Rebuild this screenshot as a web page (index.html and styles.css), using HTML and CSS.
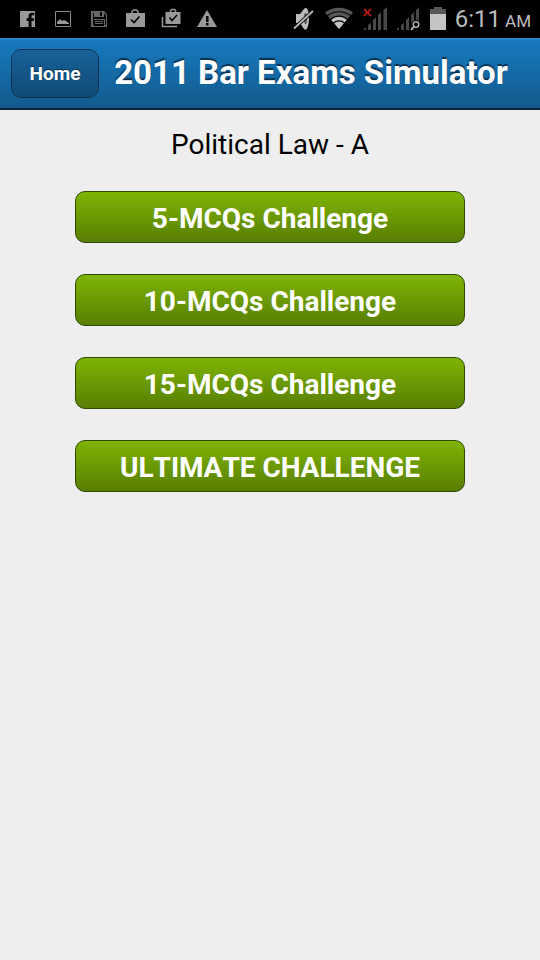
FILE: index.html
```
<!DOCTYPE html>
<html lang="en">
<head>
    <meta charset="UTF-8">
    <meta name="viewport" content="width=device-width, initial-scale=1.0">
    <title>2011 Bar Exams Simulator</title>
    <link rel="stylesheet" href="styles.css">
</head>
<body>
    <div class="status-bar">
        <div class="notifications">
            <!-- Facebook -->
            <svg width="24" height="24" viewBox="0 0 24 24">
                <path fill="#999" d="M5 4h15v16h-3.500v-6h2.200l.5-2.700h-2.700V9.500c0-.9.400-1.300 1.300-1.300h1.500V5.800h-2.300c-2.400 0-3.400 1.300-3.400 3.400v2.100h-2V14h2v6H5z"/>
            </svg>
            <!-- Picture -->
            <svg width="24" height="24" viewBox="0 0 24 24">
                <path fill="none" stroke="#888" d="M4.500 4.500h15v15h-15z"/>
                <path fill="#999" d="M6 17v-2l3-3 2 2 2-1 2 1 3 2v1z"/>
            </svg>
            <!-- Saved -->
            <svg width="24" height="24" viewBox="0 0 24 24">
                <path fill="#686868" fill-rule="evenodd" d="M4 4h13l3 3v13H4zM6 6v12h1v-6h11v6h1V8l-2-2v4H7V6zM13 5v4h2V5zM7 13v6h10v-6zM8 14h8v1H8zM8 16h8v1H8z"/>
            </svg>
            <!-- Installed app -->
            <svg width="24" height="24" viewBox="0 0 24 24">
                <path fill="none" stroke="#999" stroke-width="1.500" d="M9 6V4.500L10.500 3h3L15 4.500V6"/>
                <path fill="#999" d="M3 6h19v14H3z"/>
                <path fill="none" stroke="#000" stroke-width="1.600" d="M8 12.500l3 3 5.500-6"/>
            </svg>
            <!-- Updated apps -->
            <svg width="24" height="24" viewBox="0 0 24 24">
                <path fill="none" stroke="#999" stroke-width="1.500" d="M11.500 5V3.500l1-1h3l1 1V5M3.500 10v9.500H18"/>
                <path fill="#999" d="M6.500 5h15v12h-15z"/>
                <path fill="none" stroke="#000" stroke-width="1.500" d="M10.500 10.500l2.500 3 5-5.500"/>
            </svg>
            <!-- Warning -->
            <svg width="24" height="24" viewBox="0 0 24 24">
                <path fill="#999" d="M12 3l10 17H2z"/>
                <path fill="#000" d="M11 9h2.500v6H11zM11 16h2.500v2.500H11z"/>
            </svg>
        </div>
        <div class="indicators">
            <!-- Muted -->
            <svg width="22" height="26" viewBox="0 0 22 26">
                <path fill="#bbb" d="M3 8h4l4-5c3-3 5 2 5 9s-2 14-5 11l-4-6H3z"/>
                <ellipse cx="12.500" cy="12.500" rx="1.500" ry="5.500" fill="#555"/>
                <path stroke="#000" stroke-width="3.500" d="M0 23.500L20 5"/>
                <path stroke="#bbb" stroke-width="1.700" d="M1 22.500L20 5"/>
            </svg>
            <!-- Wifi -->
            <svg width="32" height="26" viewBox="0 0 32 26">
                <path fill="#585858" d="M2 6.500C10 0 22 0 30 6.500L16 23z"/>
                <path fill="#c4c4c4" d="M8 13.500c4-4 12-4 16 0L16 23z"/>
                <path fill="none" stroke="#000" stroke-width="1.200" d="M4.500 9.500c7-5 16-5 23 0M7.500 13.500c5-4.500 12-4.500 17 0M10.500 17c3-2.800 8-2.800 11 0"/>
            </svg>
            <!-- No service -->
            <svg width="24" height="26" viewBox="0 0 24 26">
                <path fill="#484848" d="M0 24l3-3v3zM5 19l3-2v7H5zM10 14l3-3v13h-3zM15 9l3-3v18h-3zM20.500 4L24 1v23h-3.500z"/>
                <path stroke="#b01818" stroke-width="1.800" d="M1 3l7 7M8 3l-7 7"/>
            </svg>
            <!-- Searching -->
            <svg width="26" height="26" viewBox="0 0 26 26">
                <path fill="#484848" d="M1 24l3-3v3zM6 19l3-2v7H6zM11 14l3-3v13h-3zM16 9l3-3v18h-3zM21 4l3-3v14h-3z"/>
                <circle cx="21" cy="19" r="5" fill="#000"/>
                <circle cx="21" cy="18.500" r="2.800" fill="#000" stroke="#bbb" stroke-width="1.300"/>
                <path stroke="#bbb" stroke-width="1.500" d="M19 20.500L16 24"/>
            </svg>
            <!-- Battery -->
            <svg width="18" height="26" viewBox="0 0 18 26">
                <path fill="#585858" d="M5 1h8v2h4v6H1V3h4z"/>
                <path fill="#c4c4c4" d="M1 8h16v16H1z"/>
            </svg>
            <div class="clock">6:11<span class="meridiem">AM</span></div>
        </div>
    </div>

    <header class="header">
        <button class="home" type="button">Home</button>
        <h1>2011 Bar Exams Simulator</h1>
    </header>

    <main class="content">
        <h2>Political Law - A</h2>
        <div class="challenges">
            <button class="challenge" type="button">5-MCQs Challenge</button>
            <button class="challenge" type="button">10-MCQs Challenge</button>
            <button class="challenge" type="button">15-MCQs Challenge</button>
            <button class="challenge" type="button">ULTIMATE CHALLENGE</button>
        </div>
    </main>
</body>
</html>
```
FILE: styles.css
```
* {
    box-sizing: border-box;
}
body {
    font-family: Roboto, sans-serif;
    margin: 0;
    background-color: #eee;
    color: black;
}
svg {
    display: block;
    flex-shrink: 0;
}
.status-bar {
    display: flex;
    align-items: center;
    justify-content: space-between;
    height: 38px;
    padding: 0 9px 0 15px;
    background-color: black;
}
.notifications {
    display: flex;
    gap: 12px;
}
.indicators {
    display: flex;
    align-items: center;
    gap: 8px;
}
.clock {
    display: flex;
    align-items: baseline;
    gap: 4px;
    padding-top: 2px;
    color: #bbb;
    font-size: 24px;
    line-height: 28px;
}
.meridiem {
    font-size: 17px;
}
.header {
    display: flex;
    align-items: center;
    height: 72px;
    padding: 0 17px 2px 11px;
    background-image: linear-gradient(#1779be, #125a8d);
    border-top: 2px solid #2586c4;
    border-bottom: 2px solid #062338;
}
.home {
    width: 88px;
    height: 49px;
    padding: 0;
    font-family: inherit;
    font-size: 19px;
    font-weight: bold;
    color: white;
    text-shadow: 0 -1px 1px #0a3250;
    background-image: linear-gradient(#17629b, #104a73);
    border: 1px solid #08304f;
    border-radius: 10px;
    cursor: pointer;
}
h1 {
    flex: 1;
    margin: 0;
    font-size: 33px;
    line-height: 40px;
    text-align: center;
    white-space: nowrap;
    color: white;
    text-shadow: 0 -2px 1px #0a3250;
}
h2 {
    margin: 0;
    font-size: 28px;
    font-weight: normal;
    line-height: 36px;
    text-align: center;
}
.content {
    padding: 17px 75px;
}
.challenges {
    display: flex;
    flex-direction: column;
    gap: 31px;
    margin-top: 28px;
}
.challenge {
    height: 52px;
    padding: 2px 0 0;
    font-family: inherit;
    font-size: 28px;
    font-weight: bold;
    font-kerning: none;
    color: white;
    background-image: linear-gradient(#7fb404, #587e03);
    border: 1px solid #2f4a06;
    border-radius: 10px;
    cursor: pointer;
}
```
